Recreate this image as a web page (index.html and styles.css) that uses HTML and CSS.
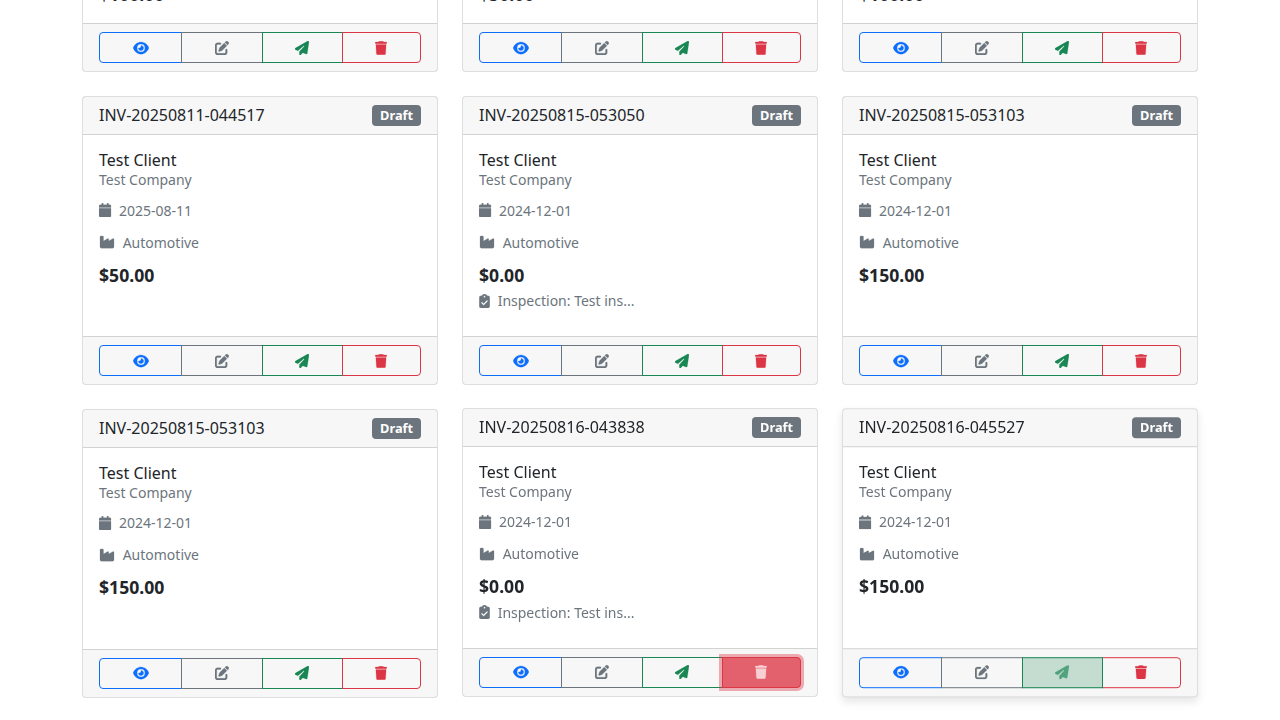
FILE: index.html
```
<!DOCTYPE html>
<html lang="en">
<head>
<meta charset="utf-8">
<title>Invoices</title>
<link rel="stylesheet" href="styles.css">
</head>
<body>
<svg class="sprite" aria-hidden="true">
<symbol id="eye" viewBox="0 0 576 512"><path d="M288 32c-80.800 0-145.500 36.800-192.600 80.600C48.600 156 17.300 208 2.500 243.700c-3.300 7.900-3.300 16.700 0 24.600C17.300 304 48.600 356 95.400 399.400C142.500 443.200 207.200 480 288 480s145.500-36.800 192.600-80.600c46.800-43.500 78.100-95.400 93-131.100c3.300-7.900 3.300-16.700 0-24.600c-14.900-35.700-46.200-87.700-93-131.100C433.500 68.800 368.800 32 288 32zM144 256a144 144 0 1 1 288 0 144 144 0 1 1 -288 0zm144-64c0 35.300-28.700 64-64 64c-7.100 0-13.900-1.200-20.300-3.300c-5.500-1.800-11.900 1.600-11.700 7.400c.3 6.900 1.300 13.800 3.200 20.700c13.700 51.200 66.400 81.600 117.600 67.900s81.600-66.400 67.900-117.600c-11.100-41.500-47.800-69.400-88.600-71.100c-5.800-.2-9.200 6.100-7.400 11.700c2.100 6.400 3.300 13.200 3.300 20.300z"/></symbol>
<symbol id="edit" viewBox="0 0 512 512"><path d="M471.600 21.700c-21.900-21.900-57.300-21.900-79.200 0L362.300 51.700l97.900 97.900 30.100-30.100c21.900-21.900 21.900-57.300 0-79.200L471.600 21.700zm-299.200 220c-6.100 6.100-10.800 13.600-13.500 21.900l-29.600 88.800c-2.900 8.600-.6 18.100 5.800 24.600s15.900 8.700 24.600 5.800l88.800-29.600c8.200-2.700 15.700-7.400 21.900-13.500L437.700 172.300 339.700 74.300 172.400 241.700zM96 64C43 64 0 107 0 160V416c0 53 43 96 96 96H352c53 0 96-43 96-96V320c0-17.700-14.300-32-32-32s-32 14.300-32 32v96c0 17.700-14.300 32-32 32H96c-17.700 0-32-14.300-32-32V160c0-17.700 14.300-32 32-32h96c17.700 0 32-14.300 32-32s-14.300-32-32-32H96z"/></symbol>
<symbol id="send" viewBox="0 0 512 512"><path d="M498.100 5.600c10.100 7 15.400 19.100 13.500 31.200l-64 416c-1.500 9.700-7.400 18.200-16 23s-18.900 5.400-28 1.600L284 427.700l-68.500 74.100c-8.900 9.700-22.900 12.900-35.200 8.100S160 493.200 160 480V396.400c0-4 1.500-7.800 4.200-10.700L331.800 202.800c5.800-6.300 5.600-16-.4-22s-15.700-6.400-22-.7L106 360.800 17.700 316.600C7.100 311.300 .3 300.700 0 288.900s5.900-22.800 16.100-28.700l448-256c10.700-6.100 23.900-5.500 34 1.400z"/></symbol>
<symbol id="trash" viewBox="0 0 448 512"><path d="M135.200 17.700L128 32H32C14.300 32 0 46.300 0 64S14.300 96 32 96H416c17.700 0 32-14.300 32-32s-14.300-32-32-32H320l-7.200-14.300C307.400 6.800 296.300 0 284.200 0H163.800c-12.100 0-23.200 6.800-28.600 17.700zM416 128H32L53.200 467c1.600 25.300 22.600 45 47.900 45H346.900c25.300 0 46.300-19.700 47.900-45L416 128z"/></symbol>
<symbol id="calendar" viewBox="0 0 448 512"><path d="M96 32V64H48C21.500 64 0 85.500 0 112v48H448V112c0-26.500-21.500-48-48-48H352V32c0-17.700-14.300-32-32-32s-32 14.300-32 32V64H160V32c0-17.700-14.300-32-32-32S96 14.300 96 32zM448 192H0V464c0 26.500 21.500 48 48 48H400c26.500 0 48-21.500 48-48V192z"/></symbol>
<symbol id="industry" viewBox="0 0 576 512"><path d="M64 32C46.300 32 32 46.300 32 64V304v48 80c0 26.500 21.500 48 48 48H496c26.500 0 48-21.500 48-48V304 152.200c0-18.200-19.400-29.700-35.400-21.100L352 215.400V152.200c0-18.200-19.400-29.700-35.400-21.100L160 215.400V64c0-17.700-14.300-32-32-32H64z"/></symbol>
<symbol id="clipboard" viewBox="0 0 384 512"><path d="M192 0c-41.800 0-77.400 26.700-90.500 64H64C28.700 64 0 92.700 0 128V448c0 35.300 28.700 64 64 64H320c35.300 0 64-28.700 64-64V128c0-35.300-28.700-64-64-64H282.500C269.400 26.700 233.800 0 192 0zm0 64a32 32 0 1 1 0 64 32 32 0 1 1 0-64zM305 273L177 401c-9.400 9.400-24.600 9.400-33.900 0L79 337c-9.400-9.400-9.400-24.600 0-33.900s24.600-9.400 33.900 0l47 47L271 239c9.400-9.400 24.600-9.400 33.900 0s9.400 24.600 0 33.900z"/></symbol>
</svg>
<main class="invoices">
  <article class="card card-cut">
    <div class="card-body"><div class="amount">$100.00</div></div>
    <footer class="card-footer"><div class="btn-group"><button class="btn view"><svg class="icon w18"><use href="#eye"/></svg></button><button class="btn edit"><svg class="icon w16"><use href="#edit"/></svg></button><button class="btn send"><svg class="icon w16"><use href="#send"/></svg></button><button class="btn delete"><svg class="icon w14"><use href="#trash"/></svg></button></div></footer>
  </article>
  <article class="card card-cut">
    <div class="card-body"><div class="amount">$50.00</div></div>
    <footer class="card-footer"><div class="btn-group"><button class="btn view"><svg class="icon w18"><use href="#eye"/></svg></button><button class="btn edit"><svg class="icon w16"><use href="#edit"/></svg></button><button class="btn send"><svg class="icon w16"><use href="#send"/></svg></button><button class="btn delete"><svg class="icon w14"><use href="#trash"/></svg></button></div></footer>
  </article>
  <article class="card card-cut">
    <div class="card-body"><div class="amount">$100.00</div></div>
    <footer class="card-footer"><div class="btn-group"><button class="btn view"><svg class="icon w18"><use href="#eye"/></svg></button><button class="btn edit"><svg class="icon w16"><use href="#edit"/></svg></button><button class="btn send"><svg class="icon w16"><use href="#send"/></svg></button><button class="btn delete"><svg class="icon w14"><use href="#trash"/></svg></button></div></footer>
  </article>

  <article class="card">
    <header class="card-header"><h6 class="title">INV-20250811-044517</h6><span class="badge">Draft</span></header>
    <div class="card-body">
      <h6 class="title">Test Client</h6>
      <p class="company">Test Company</p>
      <div class="meta"><small><svg class="icon w14"><use href="#calendar"/></svg> 2025-08-11</small></div>
      <div class="meta"><small><svg class="icon w18"><use href="#industry"/></svg> Automotive</small></div>
      <div class="amount">$50.00</div>
    </div>
    <footer class="card-footer"><div class="btn-group"><button class="btn view"><svg class="icon w18"><use href="#eye"/></svg></button><button class="btn edit"><svg class="icon w16"><use href="#edit"/></svg></button><button class="btn send"><svg class="icon w16"><use href="#send"/></svg></button><button class="btn delete"><svg class="icon w14"><use href="#trash"/></svg></button></div></footer>
  </article>
  <article class="card">
    <header class="card-header"><h6 class="title">INV-20250815-053050</h6><span class="badge">Draft</span></header>
    <div class="card-body">
      <h6 class="title">Test Client</h6>
      <p class="company">Test Company</p>
      <div class="meta"><small><svg class="icon w14"><use href="#calendar"/></svg> 2024-12-01</small></div>
      <div class="meta"><small><svg class="icon w18"><use href="#industry"/></svg> Automotive</small></div>
      <div class="amount">$0.00</div>
      <div class="meta"><small><svg class="icon w12"><use href="#clipboard"/></svg> Inspection: Test ins...</small></div>
    </div>
    <footer class="card-footer"><div class="btn-group"><button class="btn view"><svg class="icon w18"><use href="#eye"/></svg></button><button class="btn edit"><svg class="icon w16"><use href="#edit"/></svg></button><button class="btn send"><svg class="icon w16"><use href="#send"/></svg></button><button class="btn delete"><svg class="icon w14"><use href="#trash"/></svg></button></div></footer>
  </article>
  <article class="card">
    <header class="card-header"><h6 class="title">INV-20250815-053103</h6><span class="badge">Draft</span></header>
    <div class="card-body">
      <h6 class="title">Test Client</h6>
      <p class="company">Test Company</p>
      <div class="meta"><small><svg class="icon w14"><use href="#calendar"/></svg> 2024-12-01</small></div>
      <div class="meta"><small><svg class="icon w18"><use href="#industry"/></svg> Automotive</small></div>
      <div class="amount">$150.00</div>
    </div>
    <footer class="card-footer"><div class="btn-group"><button class="btn view"><svg class="icon w18"><use href="#eye"/></svg></button><button class="btn edit"><svg class="icon w16"><use href="#edit"/></svg></button><button class="btn send"><svg class="icon w16"><use href="#send"/></svg></button><button class="btn delete"><svg class="icon w14"><use href="#trash"/></svg></button></div></footer>
  </article>

  <article class="card">
    <header class="card-header"><h6 class="title">INV-20250815-053103</h6><span class="badge">Draft</span></header>
    <div class="card-body">
      <h6 class="title">Test Client</h6>
      <p class="company">Test Company</p>
      <div class="meta"><small><svg class="icon w14"><use href="#calendar"/></svg> 2024-12-01</small></div>
      <div class="meta"><small><svg class="icon w18"><use href="#industry"/></svg> Automotive</small></div>
      <div class="amount">$150.00</div>
    </div>
    <footer class="card-footer"><div class="btn-group"><button class="btn view"><svg class="icon w18"><use href="#eye"/></svg></button><button class="btn edit"><svg class="icon w16"><use href="#edit"/></svg></button><button class="btn send"><svg class="icon w16"><use href="#send"/></svg></button><button class="btn delete"><svg class="icon w14"><use href="#trash"/></svg></button></div></footer>
  </article>
  <article class="card lifted">
    <header class="card-header"><h6 class="title">INV-20250816-043838</h6><span class="badge">Draft</span></header>
    <div class="card-body">
      <h6 class="title">Test Client</h6>
      <p class="company">Test Company</p>
      <div class="meta"><small><svg class="icon w14"><use href="#calendar"/></svg> 2024-12-01</small></div>
      <div class="meta"><small><svg class="icon w18"><use href="#industry"/></svg> Automotive</small></div>
      <div class="amount">$0.00</div>
      <div class="meta"><small><svg class="icon w12"><use href="#clipboard"/></svg> Inspection: Test ins...</small></div>
    </div>
    <footer class="card-footer"><div class="btn-group"><button class="btn view"><svg class="icon w18"><use href="#eye"/></svg></button><button class="btn edit"><svg class="icon w16"><use href="#edit"/></svg></button><button class="btn send"><svg class="icon w16"><use href="#send"/></svg></button><button class="btn delete focused"><svg class="icon w14"><use href="#trash"/></svg></button></div></footer>
  </article>
  <article class="card lifted raised">
    <header class="card-header"><h6 class="title">INV-20250816-045527</h6><span class="badge">Draft</span></header>
    <div class="card-body">
      <h6 class="title">Test Client</h6>
      <p class="company">Test Company</p>
      <div class="meta"><small><svg class="icon w14"><use href="#calendar"/></svg> 2024-12-01</small></div>
      <div class="meta"><small><svg class="icon w18"><use href="#industry"/></svg> Automotive</small></div>
      <div class="amount">$150.00</div>
    </div>
    <footer class="card-footer"><div class="btn-group"><button class="btn view"><svg class="icon w18"><use href="#eye"/></svg></button><button class="btn edit"><svg class="icon w16"><use href="#edit"/></svg></button><button class="btn send hovered"><svg class="icon w16"><use href="#send"/></svg></button><button class="btn delete"><svg class="icon w14"><use href="#trash"/></svg></button></div></footer>
  </article>
</main>
</body>
</html>
```
FILE: styles.css
```
*, *::before, *::after { box-sizing: border-box; }
body {
  margin: 0;
  height: 720px;
  overflow: hidden;
  background: #fff;
  color: #212529;
  font: 400 16px/1.5 "Noto Sans", "Liberation Sans", sans-serif;
}
.sprite { display: none; }
.invoices {
  width: 1116px;
  margin: -55.8px auto 0;
  display: grid;
  grid-template-columns: repeat(3, 356px);
  grid-template-rows: 128px 288.7px 288.7px;
  gap: 24px;
}
.card {
  display: flex;
  flex-direction: column;
  background: #fff;
  border: 1px solid rgba(0, 0, 0, .13);
  background-clip: border-box;
  border-radius: 4px;
}
.card-header {
  display: flex;
  justify-content: space-between;
  align-items: center;
  padding: 8px 16px;
  background: rgba(0, 0, 0, .03);
  border-bottom: 1px solid rgba(0, 0, 0, .15);
}
.title { margin: 0; font-size: 16px; font-weight: 400; line-height: 1.2; }
.badge {
  padding: 4.2px 7.9px;
  border-radius: 4px;
  background: #6c757d;
  color: #fff;
  font-size: 12.8px;
  font-weight: 700;
  line-height: 1;
}
.card-body { flex: 1 1 0; min-height: 0; padding: 16px; }
.card-cut .card-body { display: flex; align-items: flex-end; }
.company { margin: -1.6px 0 7.6px; color: #6c757d; font-size: 14px; }
.meta { margin-bottom: 8px; color: #6c757d; }
.meta small { font-size: 14px; }
.amount { font-size: 17.6px; font-weight: 700; }
.icon {
  display: inline-block;
  height: 14px;
  fill: currentColor;
  stroke: currentColor;
  stroke-width: 8px;
  vertical-align: -1.7px;
  overflow: visible;
}
.meta .icon { margin-right: 4px; }
.w18 { width: 16px; }
.w16 { width: 14px; }
.w14 { width: 12.25px; }
.btn .w14 { width: 12px; }
.w12 { width: 11px; }
.card-footer {
  padding: 8px 16px;
  background: rgba(0, 0, 0, .03);
  border-top: 1px solid rgba(0, 0, 0, .15);
}
.btn-group { display: flex; }
.btn {
  flex: 1 1 auto;
  margin: 0;
  padding: 4px 8px;
  border: 1px solid currentColor;
  background: transparent;
  font: 400 14px/1.5 "Noto Sans", sans-serif;
}
.btn + .btn { margin-left: -1px; }
.btn:first-child { border-radius: 4px 0 0 4px; }
.btn:last-child { border-radius: 0 4px 4px 0; }
.view { color: #0d6efd; }
.edit { color: #6c757d; }
.send { color: #198754; }
.delete { color: #dc3545; }
.lifted { transform: translateY(-1px); will-change: transform; }
.raised { transform: translateY(-.8px); box-shadow: 0 4px 8px rgba(0, 0, 0, .1); }
.focused {
  position: relative;
  border-color: #dc3545;
  background: #e3616d;
  color: #f8cfd3;
  box-shadow: 0 0 0 3px rgba(220, 53, 69, .4);
}
.hovered {
  position: relative;
  border-color: #198754;
  background: #c4ddd0;
  color: #51a37d;
}
```
